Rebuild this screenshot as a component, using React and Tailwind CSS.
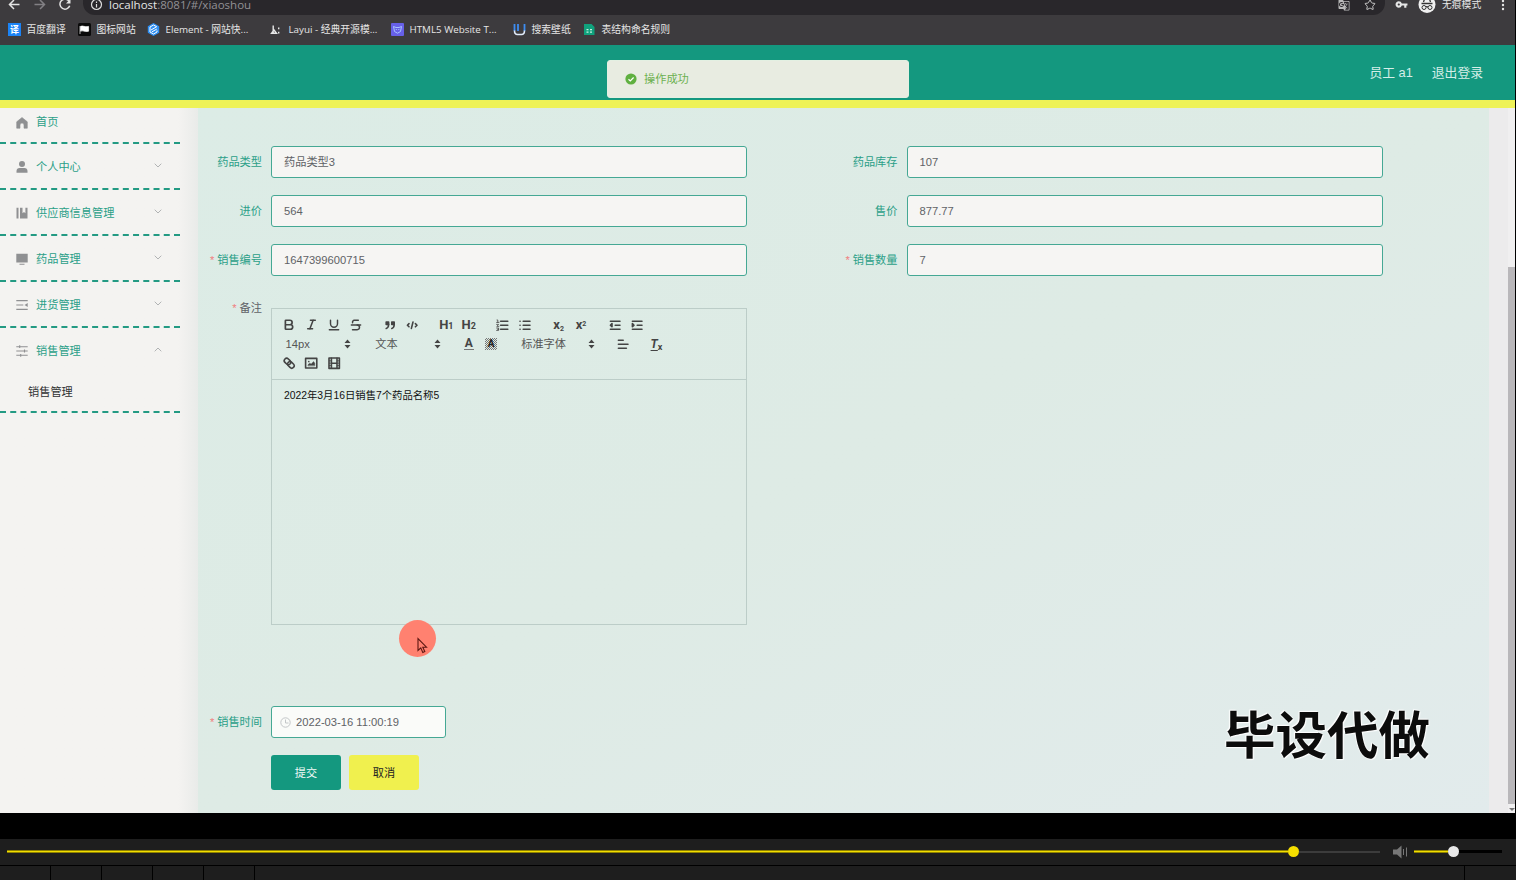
import { Bold, Italic, Underline, Strikethrough, Star } from "lucide-react";
import { MdGTranslate, MdVpnKey } from "react-icons/md";

const bookmarks = [
  { text: "百度翻译", icon: "fanyi", w: "w-[70px]" },
  { text: "图标网站", icon: "flag", w: "w-[69px]" },
  { text: "Element - 网站快...", icon: "element", w: "w-[123px]" },
  { text: "Layui - 经典开源模...", icon: "layui", w: "w-[121px]" },
  { text: "HTML5 Website T...", icon: "html5", w: "w-[122px]" },
  { text: "搜索壁纸", icon: "wall", w: "w-[70px]" },
  { text: "表结构命名规则", icon: "sheet", w: "w-[90px]" },
];

const menus = [
  { name: "个人中心", icon: "user" },
  { name: "供应商信息管理", icon: "book" },
  { name: "药品管理", icon: "monitor" },
  { name: "进货管理", icon: "list" },
  { name: "销售管理", icon: "sliders", open: true },
];

const BookmarkIcon = ({ name }) => {
  if (name === "fanyi")
    return (
      <span className="flex h-[13px] w-[13px] items-center justify-center bg-[#1b83f5] text-[9px] leading-none font-bold text-white">
        译
      </span>
    );
  return (
    <svg width="13" height="13" viewBox="0 0 13 13" fill="none">
      {name === "flag" && (
        <>
          <rect width="13" height="13" rx="1.5" fill="#0a0a0a" />
          <path d="M2 3v8M2.6 3.4c2.4-1.2 3.4 1 8 0v4.8c-4.600 1-5.600-1.200-8 0z" fill="#fff" stroke="#fff" strokeWidth=".7" />
        </>
      )}
      {name === "element" && (
        <>
          <path d="M6.500 0l5.700 3.300v6.400L6.500 13 .8 9.700V3.300z" fill="#2f8ff2" />
          <path d="M9.800 3.800L6.500 2 3 4v5l3.500 2 3.500-2V7.500M4 7l5.500-3.200M5 8.800l4.800-2.700" stroke="#fff" strokeWidth="1" />
        </>
      )}
      {name === "layui" && (
        <path d="M3.200 2.500v8M1.500 10.300L4 7l2.500 3.300zM8.700 4.500v1.800M8.700 8.700v1.800" stroke="#e8e8e8" strokeWidth="1.400" />
      )}
      {name === "html5" && (
        <>
          <rect width="13" height="13" rx="1" fill="#6760e8" />
          <path d="M2.500 3.500l1 5 3 1.700 3-1.700 1-5M2.500 3.500l2.500 1h3l2.500-1M4.800 6.500h1M7.300 6.500h1" stroke="#a9c4ff" strokeWidth="1" />
        </>
      )}
      {name === "wall" && (
        <>
          <path d="M1.500 1v7M5 1v7M11.500 1v7" stroke="#3d8cf0" strokeWidth="1.800" />
          <path d="M1.500 7.500c0 2.500 1 4 3 4h4c2 0 3-1.500 3-4" stroke="#dfe9f8" strokeWidth="1.600" />
        </>
      )}
      {name === "sheet" && (
        <>
          <path d="M1 1h7.500L11.500 4v8H1z" fill="#10a27d" />
          <path d="M3.500 6.700h2M7 6.700h2M3.500 9.200h2M7 9.200h2" stroke="#c8efe2" strokeWidth="1.200" />
        </>
      )}
    </svg>
  );
};

const MenuIcon = ({ name }) => (
  <svg width="14" height="14" viewBox="0 0 14 14" fill="none" stroke="#8f9092" strokeWidth="1.200">
    {name === "home" && (
      <path d="M7 1.500l5.300 4.300v6.400H9V9a2 2 0 0 0-4 0v3.200H1.700V5.800z" fill="#8f9092" strokeWidth=".6" />
    )}
    {name === "user" && (
      <g fill="#8f9092" stroke="none">
        <circle cx="7" cy="4" r="3" />
        <path d="M1.500 12.700V11c0-1.700 1.300-2.900 3-2.900h5c1.700 0 3 1.200 3 2.900v1.700z" />
      </g>
    )}
    {name === "book" && (
      <path d="M1.500 1.800h2v10.700h-2zM5 1.800h2.500v5.500L9 6.100l1.400 1.200V1.800H12.500v10.700H5z" fill="#8f9092" stroke="none" />
    )}
    {name === "monitor" && (
      <path d="M1.300 1.800h11.400v8.700H1.300zM4.500 11.800h5v.9h-5z" fill="#8f9092" stroke="none" />
    )}
    {name === "list" && (
      <>
        <path d="M1.300 2.700h11.400M1.300 7h7M1.300 11.300h11.400" />
        <path d="M12.700 5L9.500 7l3.200 2z" fill="#8f9092" stroke="none" />
      </>
    )}
    {name === "sliders" && (
      <path d="M1.300 2.700h11.400M1.300 7h11.400M1.300 11.300h11.400M4.700 1.300v2.800M9.500 5.600v2.800M5.700 9.900v2.800" strokeWidth="1.100" />
    )}
  </svg>
);

const Arrow = ({ up }) => (
  <svg width="8" height="5" viewBox="0 0 8 5" fill="none" stroke="#a9abad" strokeWidth=".9">
    <path d={up ? "M.7 4.300L4 1l3.300 3.300" : "M.7.7L4 4 7.300.7"} />
  </svg>
);

const Tool = ({ children }) => (
  <span className="flex h-[19.2px] w-[22.4px] items-center justify-center">{children}</span>
);

const Icon = ({ children }) => (
  <svg width="14.4" height="14.4" viewBox="0 0 18 18" fill="none" stroke="#444" strokeWidth="2" strokeLinecap="round" strokeLinejoin="round">
    {children}
  </svg>
);

const Group = ({ children }) => <span className="mr-[11.4px] flex">{children}</span>;

const Picker = ({ label, width }) => (
  <span className={`mr-[11.4px] flex h-[19.2px] items-center justify-between pr-1 pl-[7.5px] text-[11.2px] text-[#555] ${width}`}>
    <span className="pt-px">{label}</span>
    <svg width="9" height="10" viewBox="0 0 9 10" fill="#444">
      <path d="M1.500 4l3-3.500 3 3.500zM1.500 6l3 3.500 3-3.500z" />
    </svg>
  </span>
);

const Label = ({ text, required, dark, width }) => (
  <div className={`flex shrink-0 justify-end pt-px pr-[9px] ${width} ${dark ? "text-[#606266]" : "text-[#2b9f88]"}`}>
    {required && <span className="mr-[3px] text-[#f08080]">*</span>}
    {text}
  </div>
);

const Field = ({ label, value, required, labelWidth }) => (
  <div className="flex items-center">
    <Label text={label} required={required} width={labelWidth} />
    <div className="flex h-8 w-[476px] items-center rounded-[3px] border border-[#45a894] bg-[#f6f5f3] px-3 pt-px text-[#606266]">
      {value}
    </div>
  </div>
);

const Row = ({ left, right }) => (
  <div className="mb-[17px] flex">
    <Field {...left} labelWidth="w-[73px]" />
    <Field {...right} labelWidth="w-[159.5px]" />
  </div>
);

const Browser = () => (
  <div className="h-[45px] shrink-0 overflow-hidden bg-[#3d3b3e] font-['Open_Sans','Noto_Sans_CJK_SC',sans-serif] text-[#e6e6e6]">
    <div className="flex h-[15px]">
      <svg width="83" height="15" viewBox="0 0 83 15" fill="none" strokeWidth="1.500">
        <path d="M19.500 4.500h-10M14 0L9.500 4.500 14 9" stroke="#e4e4e4" />
        <path d="M34.500 4.500h10M40 0l4.500 4.500L40 9" stroke="#828084" />
        <path d="M69 1.200a5 5 0 1 0 .7 4.600" stroke="#e4e4e4" />
        <path d="M70.500-1v4.500H66z" fill="#e4e4e4" />
      </svg>
      <div className="flex h-[15px] w-[1302px] rounded-br-xl rounded-bl-xl bg-[#29272b] pl-[7px]">
        <svg width="13" height="15" viewBox="0 0 13 15" fill="none" stroke="#dedede" strokeWidth="1.200">
          <circle cx="6.500" cy="4.500" r="5" />
          <path d="M6.500 4v3.500M6.500 1.500V3" />
        </svg>
        <span className="ml-[6px] text-[11.5px] leading-[9px] text-[#929195]">
          <span className="text-[#e6e6e6]">localhost</span>:8081/#/xiaoshou
        </span>
        <MdGTranslate className="-mt-[1px] ml-auto h-3 w-3 text-[#b9b9b9]" />
        <Star className="-mt-[1px] mr-[9px] ml-[14px] h-3 w-3 text-[#c9c9c9]" />
      </div>
      <MdVpnKey className="-mt-[2px] ml-[10px] h-[13px] w-[13px]" />
      <svg className="ml-[10px]" width="18" height="15" viewBox="0 0 18 15">
        <circle cx="9" cy="4.500" r="8.500" fill="#f0f0f0" />
        <path d="M3.500 3.500h11M5.500 2l1-3h5l1 3M8 7c1-1 1 0 2 0" stroke="#333" strokeWidth="1.300" fill="none" />
        <circle cx="6" cy="7.500" r="2" stroke="#333" fill="none" />
        <circle cx="12" cy="7.500" r="2" stroke="#333" fill="none" />
      </svg>
      <span className="ml-[6px] text-[9.8px] leading-[10px] whitespace-nowrap">无痕模式</span>
      <svg className="ml-[20px]" width="4" height="12" viewBox="0 0 4 12" fill="#e6e6e6">
        <circle cx="2" cy="1" r="1.200" />
        <circle cx="2" cy="5" r="1.200" />
        <circle cx="2" cy="9" r="1.200" />
      </svg>
    </div>
    <div className="flex h-[29px] items-center pl-2">
      {bookmarks.map((b) => (
        <div key={b.text} className={`flex shrink-0 items-center gap-[5.5px] text-[9.800px] whitespace-nowrap ${b.w}`}>
          <BookmarkIcon name={b.icon} />
          <span className="pt-[2px]">{b.text}</span>
        </div>
      ))}
    </div>
  </div>
);

const SideBar = () => (
  <aside className="w-[198px] shrink-0 bg-gradient-to-r from-[#f4f3f1] from-90% to-[#e9ebe9] text-[11.2px] text-[#2b9f88]">
    <div className="w-[180px]">
      <div className="flex h-9 items-center border-b-2 border-dashed border-[#239a83] pb-[5px] pl-[15px]">
        <MenuIcon name="home" />
        <span className="ml-[7px]">首页</span>
      </div>
      {menus.map((m) => (
        <div key={m.name} className="border-b-2 border-dashed border-[#239a83]">
          <div className="flex h-11 items-center pt-[2px] pr-[18px] pl-[15px]">
            <MenuIcon name={m.icon} />
            <span className="ml-[7px] pt-px">{m.name}</span>
            <span className="mb-[3px] ml-auto">
              <Arrow up={m.open} />
            </span>
          </div>
          {m.open && <div className="flex h-[39px] items-center pt-px pl-7 text-[#303133]">销售管理</div>}
        </div>
      ))}
    </div>
  </aside>
);

const Editor = () => (
  <div className="flex h-[317px] w-[476px] flex-col border border-[#bccdc8]">
    <div className="h-[71px] shrink-0 border-b border-[#bccdc8] pt-[6.4px] pl-[6px] text-[#444]">
      <div className="flex">
        <Group>
          <Tool><Bold size={13.500} strokeWidth={3} /></Tool>
          <Tool><Italic size={13} strokeWidth={2.800} /></Tool>
          <Tool><Underline size={14} strokeWidth={2.500} /></Tool>
          <Tool><Strikethrough size={14} strokeWidth={2.500} /></Tool>
        </Group>
        <Group>
          <Tool>
            <Icon>
              <path d="M4 5h3v3H4zM11 5h3v3h-3z" fill="#444" />
              <path d="M7 8c0 4-3 5-3 5M14 8c0 4-3 5-3 5" />
            </Icon>
          </Tool>
          <Tool>
            <Icon><path d="M5 7L3 9l2 2M13 7l2 2-2 2M10 5L8 13" /></Icon>
          </Tool>
        </Group>
        <Group>
          <Tool><span className="font-['Roboto'] text-[13px] leading-none font-bold">H<span className="text-[9px]">1</span></span></Tool>
          <Tool><span className="font-['Roboto'] text-[13px] leading-none font-bold">H<span className="text-[9px]">2</span></span></Tool>
        </Group>
        <Group>
          <Tool>
            <Icon>
              <path d="M7 4h9M7 9h9M7 14h9" />
              <path d="M2.500 2.500h1v3M2 5.500h3M2 8h2.500L2.300 10.500h2.500M2 12.500h2.500v3H2M3 14h1.500" strokeWidth="1" />
            </Icon>
          </Tool>
          <Tool>
            <Icon><path d="M6.500 4H15M6.500 9H15M6.500 14H15M2.500 4h.1M2.500 9h.1M2.500 14h.1" /></Icon>
          </Tool>
        </Group>
        <Group>
          <Tool><span className="font-['Roboto'] text-[13px] leading-none font-bold">x<sub className="text-[7px]">2</sub></span></Tool>
          <Tool><span className="font-['Roboto'] text-[13px] leading-none font-bold">x<sup className="text-[7px]">2</sup></span></Tool>
        </Group>
        <Group>
          <Tool>
            <Icon>
              <path d="M3 4h12M9 9h6M3 14h12" />
              <path d="M5 7v4L3 9z" fill="#444" />
            </Icon>
          </Tool>
          <Tool>
            <Icon>
              <path d="M3 4h12M9 9h6M3 14h12" />
              <path d="M3 7v4l2-2z" fill="#444" />
            </Icon>
          </Tool>
        </Group>
      </div>
      <div className="flex">
        <Picker label="14px" width="w-[78.4px]" />
        <Picker label="文本" width="w-[78.4px]" />
        <Group>
          <Tool>
            <span className="border-b border-[#777] px-[1px] font-['Roboto'] text-[12px] leading-[11px] font-bold">A</span>
          </Tool>
          <Tool>
            <span className="flex h-3 w-3 items-center justify-center bg-[repeating-conic-gradient(#777_0_25%,transparent_0_50%)] bg-[length:2px_2px] font-['Roboto'] text-[10px] leading-none font-bold text-[#222]">A</span>
          </Tool>
        </Group>
        <Picker label="标准字体" width="w-[86.4px]" />
        <Group>
          <Tool>
            <Icon><path d="M3 9h12M3 14h10M3 4h6" /></Icon>
          </Tool>
        </Group>
        <Tool>
          <span className="font-['Roboto'] text-[12px] leading-none font-bold">
            <i className="underline underline-offset-2">T</i>
            <sub className="text-[9px]">x</sub>
          </span>
        </Tool>
      </div>
      <div className="flex">
        <Tool>
          <Icon>
            <g transform="rotate(45 9 9)">
              <rect x="1.500" y="6" width="9" height="6" rx="3" />
              <rect x="7.500" y="6" width="9" height="6" rx="3" />
            </g>
          </Icon>
        </Tool>
        <Tool>
          <Icon>
            <rect x="2" y="3" width="14" height="12" />
            <circle cx="6" cy="7" r="1" fill="#444" stroke="none" />
            <path d="M5 12v-1l2-2 2 1 3-3 1.500 2v3z" fill="#444" strokeWidth=".5" />
          </Icon>
        </Tool>
        <Tool>
          <Icon>
            <rect x="2.500" y="2.500" width="13" height="13" />
            <path d="M5.500 3v12M12.500 3v12M5.500 9h7" />
            <path d="M3 6h2M3 9h2M3 12h2M13 6h2M13 9h2M13 12h2" strokeWidth="1" />
          </Icon>
        </Tool>
      </div>
    </div>
    <div className="px-3 pt-2 text-[10.35px] leading-4 text-[#111]">2022年3月16日销售7个药品名称5</div>
  </div>
);

const SalesForm = () => (
  <main className="w-[1291px] shrink-0 bg-gradient-to-br from-[#dcece6] via-[#deebe5] to-[#e2ebec] pt-[38px] text-[11.2px]">
    <Row left={{ label: "药品类型", value: "药品类型3" }} right={{ label: "药品库存", value: "107" }} />
    <Row left={{ label: "进价", value: "564" }} right={{ label: "售价", value: "877.77" }} />
    <Row
      left={{ label: "销售编号", value: "1647399600715", required: true }}
      right={{ label: "销售数量", value: "7", required: true }}
    />
    <div className="mt-[32px] flex leading-none">
      <Label text="备注" required dark width="w-[73px] -mt-[6px]" />
      <Editor />
    </div>
    <div className="mt-[81px] flex items-center">
      <Label text="销售时间" required width="w-[73px]" />
      <div className="flex h-8 w-[175px] items-center rounded-[3px] border border-[#45a894] bg-[#fafbf9] pl-2 text-[#606266]">
        <svg className="mr-[5px]" width="11" height="11" viewBox="0 0 11 11" fill="none" stroke="#c3c6c8">
          <circle cx="5.500" cy="5.500" r="4.700" />
          <path d="M5.500 2.500v3.500h3" />
        </svg>
        2022-03-16 11:00:19
      </div>
    </div>
    <div className="mt-[17px] ml-[73px] flex gap-2">
      <button className="h-[35px] w-[70px] rounded-[3px] bg-[#14987f] pt-px text-[#f3faf8]">提交</button>
      <button className="h-[35px] w-[70px] rounded-[3px] bg-[#f0f04e] pt-px text-[#222]">取消</button>
    </div>
  </main>
);

const Player = () => (
  <footer className="mt-[26px] flex h-[41px] flex-col bg-[#1e1e1e]">
    <div className="flex h-[26px] items-center pb-px pl-[7px]">
      <div className="flex w-[1373px] items-center">
        <div className="h-[3px] w-[1281px] border-y border-[#8f8200] bg-[#f2de00]" />
        <div className="h-[11px] w-[11px] rounded-full bg-[#f5df00]" />
        <div className="h-[2px] flex-1 bg-[#3c3c3c]" />
      </div>
      <svg className="mr-[6px] ml-[13px]" width="15" height="14" viewBox="0 0 15 14" fill="#777">
        <path d="M0 4.500h4L8.500.5v13L4 9.500H0z" />
        <path d="M10 4h1v6h-1zM13 2.500h1v9h-1z" />
      </svg>
      <div className="h-[3px] w-[34px] border-y border-[#8f8200] bg-[#f2de00]" />
      <div className="h-[11px] w-[11px] rounded-full bg-[#e8e8e8]" />
      <div className="h-[3px] w-[43px] bg-black" />
    </div>
    <div className="flex h-[15px] border-t border-black">
      {[1, 2, 3, 4, 5].map((n) => (
        <div key={n} className="w-[51px] border-r border-black" />
      ))}
      <div className="w-[1210px] border-r border-black" />
    </div>
  </footer>
);

const App = () => {
  return (
    <div className="relative h-[880px] w-[1516px] overflow-hidden bg-black font-['Liberation_Sans','Noto_Sans_CJK_SC',sans-serif]">
      <div className="flex h-[813px] w-[1515px] flex-col overflow-hidden">
        <Browser />
        <header className="flex h-[55px] shrink-0 items-center justify-end gap-[19px] bg-[#14987f] pr-[32px] text-[12.8px] text-[#d5eee8]">
          <span>员工 a1</span>
          <span>退出登录</span>
        </header>
        <div className="h-2 shrink-0 bg-[#eef257]" />
        <div className="flex min-h-0 flex-1">
          <SideBar />
          <SalesForm />
          <div className="w-[19px] bg-[#ecebec]" />
          <div className="flex w-[7px] flex-col items-center bg-[#f0eff0] pt-[159px]">
            <div className="h-[537px] w-[7px] bg-[#b9b7ba]" />
            <svg className="mt-1" width="6" height="4" viewBox="0 0 6 4" fill="#777">
              <path d="M0 0h6L3 3z" />
            </svg>
          </div>
        </div>
      </div>
      <Player />

      {/* success message */}
      <div className="absolute top-[60px] left-[607px] flex h-[38px] w-[302px] items-center rounded-[3px] border border-[#e3f0e2] bg-[#e8ece1] pl-[16.500px] text-[11.2px] text-[#6cb150]">
        <svg className="mr-[7.500px]" width="12" height="12" viewBox="0 0 12 12" fill="none">
          <circle cx="6" cy="6" r="5.600" fill="#5fb040" />
          <path d="M3.500 6.200l1.800 1.700 3.300-3.400" stroke="#fff" strokeWidth="1.200" />
        </svg>
        <span className="pt-px">操作成功</span>
      </div>

      <div className="absolute top-[620px] left-[399px] h-[37px] w-[37px] rounded-full bg-[#ff8170]">
        <svg className="absolute top-[17px] left-[18px]" width="12" height="18" viewBox="0 0 12 18" fill="none" stroke="#5c1712" strokeWidth="1.100">
          <path d="M1 1.500v12l2.800-2.600 2 4.600 2-1-2-4.300h3.700z" />
        </svg>
      </div>
      <div className="absolute top-[695px] left-[1224px] font-['Noto_Sans_CJK_SC',sans-serif] text-[51.5px] leading-[74px] font-bold text-[#0c0c0c] [text-shadow:0_0_2px_#fff,1px_1px_1px_#fff,-1px_-1px_1px_#fff]">
        毕设代做
      </div>
    </div>
  );
};

export default App;
